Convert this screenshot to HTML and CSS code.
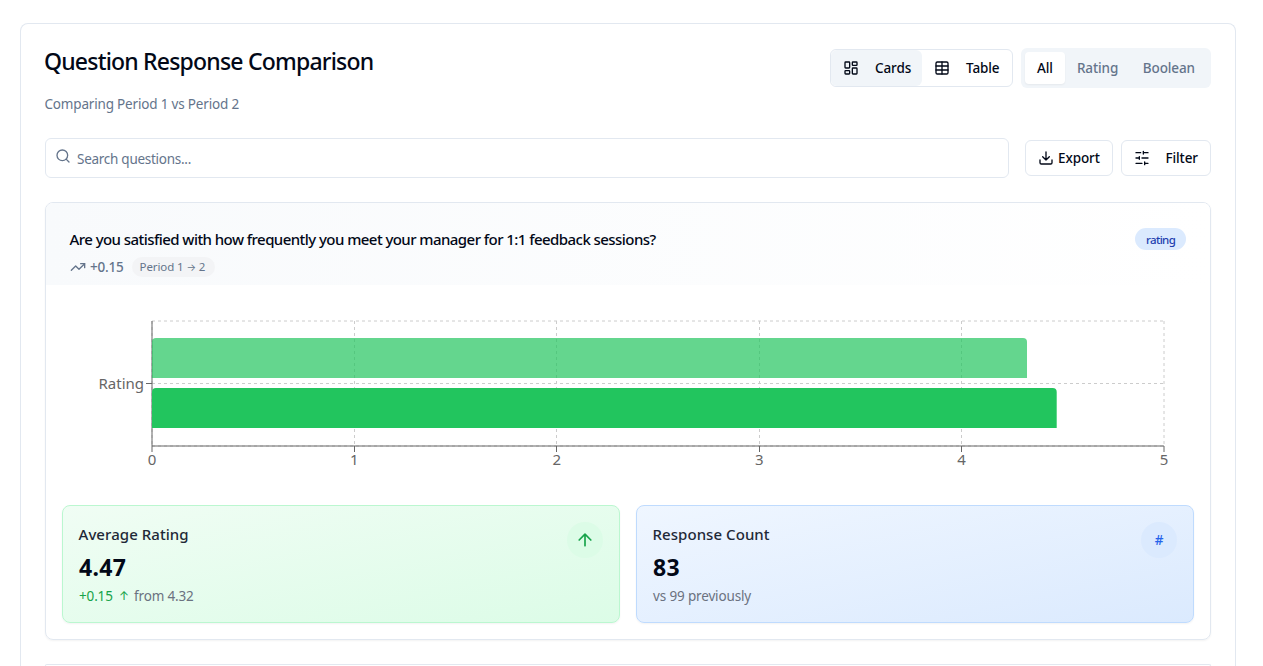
FILE: index.html
```html
<!DOCTYPE html>
<html lang="en">
<head>
<meta charset="utf-8">
<title>Question Response Comparison</title>
<link rel="stylesheet" href="styles.css">
</head>
<body>
<main class="panel">
  <header class="panel-head">
    <div>
      <h1 class="title">Question Response Comparison</h1>
      <p class="subtitle">Comparing Period 1 vs Period 2</p>
    </div>
    <div class="controls">
      <div class="view-toggle">
        <button class="view-btn cards active"><svg class="icon" viewBox="0 0 24 24"><rect width="7" height="9" x="3" y="3" rx="1"/><rect width="7" height="5" x="14" y="3" rx="1"/><rect width="7" height="9" x="14" y="12" rx="1"/><rect width="7" height="5" x="3" y="16" rx="1"/></svg><span>Cards</span></button>
        <button class="view-btn table"><svg class="icon" viewBox="0 0 24 24"><path d="M12 3v18"/><rect width="18" height="18" x="3" y="3" rx="2"/><path d="M3 9h18M3 15h18"/></svg><span>Table</span></button>
      </div>
      <div class="tabs">
        <button class="tab all selected">All</button>
        <button class="tab rate">Rating</button>
        <button class="tab bool">Boolean</button>
      </div>
    </div>
  </header>

  <div class="toolbar">
    <label class="search"><svg class="icon" viewBox="0 0 24 24"><circle cx="11" cy="11" r="8"/><path d="m21 21-4.3-4.3"/></svg><span>Search questions...</span></label>
    <button class="btn export"><svg class="icon" viewBox="0 0 24 24"><path d="M21 15v4a2 2 0 0 1-2 2H5a2 2 0 0 1-2-2v-4"/><path d="m7 10 5 5 5-5M12 15V3"/></svg><span>Export</span></button>
    <button class="btn filter"><svg class="icon" viewBox="0 0 24 24"><path d="M21 4h-7M10 4H3M21 12h-9M8 12H3M21 20h-5M12 20H3M14 2v4M8 10v4M16 18v4"/></svg><span>Filter</span></button>
  </div>

  <section class="question">
    <div class="question-head">
      <div>
        <h2 class="question-title">Are you satisfied with how frequently you meet your manager for 1:1 feedback sessions?</h2>
        <div class="question-meta">
          <svg class="icon" viewBox="0 0 24 24"><path d="m22 7-8.500 8.500-5-5L2 17"/><path d="M16 7h6v6"/></svg>
          <span class="delta">+0.15</span>
          <div class="period">Period 1 <span class="arrow">→</span> 2</div>
        </div>
      </div>
      <div class="badge">rating</div>
    </div>
    <div class="question-body">
      <svg class="chart" viewBox="0 0 1132 180">
        <g class="grid">
          <path d="M90 145H1102M90 82.500H1102M90 20H1102"/>
          <path d="M90 20V145M292.500 20V145M494.500 20V145M697.500 20V145M899.500 20V145M1102 20V145"/>
        </g>
        <g class="axis">
          <path d="M90 145H1102M90 20V145"/>
          <path d="M84 82.500h6M90 145v6M292.500 145v6M494.500 145v6M697.500 145v6M899.500 145v6M1102 145v6"/>
        </g>
        <path class="bar previous" d="M90 77V41a4 4 0 0 1 4-4H961a4 4 0 0 1 4 4V77Z"/>
        <path class="bar current" d="M90 127V91a4 4 0 0 1 4-4H990.700a4 4 0 0 1 4 4V127Z"/>
        <g class="ticks">
          <text class="category" x="82" y="88">Rating</text>
          <text x="90" y="164">0</text><text x="292.400" y="164">1</text><text x="494.800" y="164">2</text><text x="697.200" y="164">3</text><text x="899.600" y="164">4</text><text x="1102" y="164">5</text>
        </g>
      </svg>
      <div class="stats">
        <article class="stat green">
          <div>
            <h3 class="stat-name">Average Rating</h3>
            <p class="stat-value">4.47</p>
            <p class="stat-note change"><span class="up">+0.15</span><span class="up arrow">↑</span><span>from 4.32</span></p>
          </div>
          <div class="bubble"><svg viewBox="0 0 24 24"><path d="m5 12 7-7 7 7M12 19V5"/></svg></div>
        </article>
        <article class="stat blue">
          <div>
            <h3 class="stat-name">Response Count</h3>
            <p class="stat-value">83</p>
            <p class="stat-note">vs 99 previously</p>
          </div>
          <div class="bubble">#</div>
        </article>
      </div>
    </div>
  </section>
  <section class="question next"></section>
</main>
</body>
</html>
```
FILE: styles.css
```css
* { box-sizing: border-box; }
body { margin: 0; background: #fff; color: #020817; font-family: "Noto Sans", "Open Sans", sans-serif; font-size: 13.5px; line-height: 20px; }
h1, h2, h3, p { margin: 0; white-space: nowrap; }
button { font: inherit; color: inherit; letter-spacing: inherit; background: none; border: 0; padding: 0; }
svg { display: block; flex: none; }
span { white-space: nowrap; }
.icon { width: 16px; height: 16px; fill: none; stroke: currentColor; stroke-width: 2; stroke-linecap: round; stroke-linejoin: round; }
.arrow { font-family: Inter, sans-serif; }

.panel { width: 1216px; height: 643px; margin: 23px 0 0 20px; padding: 24px 24px 0; border: 1px solid #e2e8f0; border-bottom: 0; border-radius: 8px 8px 0 0; overflow: hidden; }
.panel-head { display: flex; justify-content: space-between; height: 90px; }
.title { margin-left: -1px; font-size: 23px; line-height: 26px; font-weight: 500; letter-spacing: -.8px; }
.subtitle { margin-top: 20px; margin-left: -.5px; color: #64748b; letter-spacing: -.18px; }
.controls { display: flex; align-items: center; gap: 8px; height: 40px; letter-spacing: -.1px; }
.view-toggle { display: flex; width: 183px; height: 38px; border: 1px solid #e2e8f0; border-radius: 6px; font-weight: 500; }
.view-btn { display: flex; align-items: center; gap: 16px; height: 36px; padding-left: 12px; border-radius: 6px; }
.view-btn.cards { width: 91px; }
.view-btn.active { background: #f1f5f9; }
.tabs { display: flex; width: 190px; height: 40px; padding: 4px; border-radius: 6px; background: #f1f5f9; color: #64748b; font-weight: 500; }
.tab { height: 32px; padding: 0 12px; text-align: left; border-radius: 4px; }
.tab.selected { width: 40px; background: #fff; color: #020817; box-shadow: 0 1px 2px rgba(0,0,0,.05); }
.rate { width: 66px; }

.toolbar { display: flex; align-items: center; gap: 8px; height: 40px; margin-bottom: 24px; }
.search { display: flex; width: 964px; height: 40px; margin-right: 8px; padding: 10px 9px; gap: 6px; border: 1px solid #e2e8f0; border-radius: 6px; color: #64748b; letter-spacing: -.27px; }
.search .icon { margin-top: -1px; }
.btn { display: flex; align-items: center; height: 36px; padding-left: 12px; border: 1px solid #e2e8f0; border-radius: 6px; font-weight: 500; letter-spacing: -.1px; }
.export { width: 88px; gap: 4px; }
.filter { width: 90px; gap: 15.5px; }

.question { height: 438px; border: 1px solid #e2e8f0; border-radius: 8px; box-shadow: 0 1px 2px rgba(0,0,0,.05); overflow: hidden; }
.question.next { height: 2px; margin-top: 24px; border-bottom: 0; border-radius: 8px 8px 0 0; }
.question-head { display: flex; justify-content: space-between; height: 82px; padding: 24px; background: linear-gradient(to right, #f8fafc, #fff); }
.question-title { margin-left: -.5px; font-size: 15px; line-height: 24px; font-weight: 500; letter-spacing: -.56px; }
.question-meta { display: flex; align-items: center; height: 20px; margin-top: 6px; color: #64748b; }
.delta { margin-left: 4px; font-weight: 500; letter-spacing: -.2px; }
.period { width: 83px; height: 20px; margin-left: 8px; padding-left: 8px; border-radius: 10px; background: #f3f4f6; font-size: 11.5px; letter-spacing: -.1px; white-space: nowrap; }
.period .arrow { font-size: 10px; }
.badge { width: 51px; height: 22px; margin-top: 1px; padding-left: 11px; border-radius: 11px; background: #dbeafe; color: #1e40af; font-size: 11.5px; line-height: 23px; font-weight: 500; letter-spacing: -.65px; }
.question-body { padding: 16px; }
.chart { width: 1132px; height: 180px; }
.grid { fill: none; stroke: #ccc; stroke-dasharray: 3 3; }
.axis { fill: none; stroke: #666; }
.bar { fill: #22c55e; }
.previous { fill-opacity: .7; }
.ticks { fill: #666; font-size: 15px; text-anchor: middle; }
.category { text-anchor: end; }

.stats { display: flex; gap: 16px; margin-top: 24px; }
.stat { display: flex; justify-content: space-between; width: 558px; height: 118px; padding: 16px; border: 1px solid; border-radius: 8px; box-shadow: 0 1px 2px rgba(0,0,0,.05); }
.green { border-color: #bbf7d0; background: linear-gradient(to bottom right, #f0fdf4, #dcfce7); }
.blue { border-color: #bfdbfe; background: linear-gradient(to bottom right, #eff6ff, #dbeafe); }
.stat-name { margin-left: -.5px; font-size: 15px; line-height: 24px; font-weight: 500; letter-spacing: .06px; color: #1f2937; }
.stat-value { margin-top: 5px; font-size: 23px; line-height: 32px; font-weight: 700; letter-spacing: .3px; }
.stat-note { margin-top: 3px; color: #6b7280; letter-spacing: -.15px; }
.change { display: flex; }
.up { width: 40px; color: #16a34a; }
.up.arrow { width: 15px; font-size: 12px; }
.bubble { display: flex; align-items: center; justify-content: center; width: 36px; height: 36px; border-radius: 50%; }
.green .bubble { background: #dcfce7; color: #16a34a; }
.green .bubble svg { width: 20px; height: 20px; fill: none; stroke: currentColor; stroke-width: 2; stroke-linecap: round; stroke-linejoin: round; }
.blue .bubble { background: #dbeafe; color: #2563eb; font-weight: 500; }
```
